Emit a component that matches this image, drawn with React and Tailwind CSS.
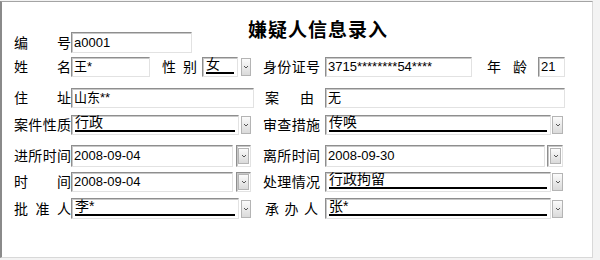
import React from "react"

const sunken =
  "border border-t-[#8e8e8e] border-l-[#8e8e8e] border-r-[#e2e2e2] border-b-[#e2e2e2] shadow-[inset_1px_1px_0_#c8c8c8] bg-white"

function Label({ text, className = "w-[57px]" }) {
  return (
    <div className={`flex shrink-0 justify-between text-[14px] leading-[16px] ${className}`}>
      {text.split("").map((c, i) => (
        <span key={i}>{c}</span>
      ))}
    </div>
  )
}

function TextBox({ value, className }) {
  return (
    <div className={`flex h-full shrink-0 items-center pl-[2px] text-[13px] ${sunken} ${className}`}>
      {value}
    </div>
  )
}

function Arrow({ className = "h-[18px] w-[10px]" }) {
  return (
    <div
      className={`flex shrink-0 items-center justify-center border border-[#b4b4b4] bg-gradient-to-b from-[#fbfbfb] to-[#dadada] ${className}`}
    >
      <svg width="6" height="4" viewBox="0 0 6 4">
        <path d="M1 1 L3 3 L5 1" fill="none" stroke="#555" strokeWidth="1" />
      </svg>
    </div>
  )
}

function Combo({ value, boxW, gap = "ml-[2px]", arrowW = "w-[10px]" }) {
  return (
    <div className="flex h-full items-center">
      <div className={`flex h-full shrink-0 items-end px-[3px] pb-[2px] ${sunken} ${boxW}`}>
        <div className="w-full border-b-2 border-black text-[14px] leading-[15px]">{value}</div>
      </div>
      <div className={gap}>
        <Arrow className={`h-[18px] ${arrowW}`} />
      </div>
    </div>
  )
}

function DateBox({ value, boxW, frameW, gap = "ml-[3px]" }) {
  return (
    <div className="flex h-full items-center">
      <TextBox value={value} className={boxW} />
      <div className={`flex h-full shrink-0 items-center justify-end pr-[1px] ${sunken} ${gap} ${frameW}`}>
        <Arrow className="h-[16px] w-[11px]" />
      </div>
    </div>
  )
}

function Row({ className, left, leftLabel, right, rightLabel, rightLabelW }) {
  return (
    <div className={`flex items-center ${className}`}>
      <Label text={leftLabel} />
      <div className="flex h-full w-[192px] shrink-0">{left}</div>
      <div className="w-[62px] shrink-0">
        <Label text={rightLabel} className={rightLabelW || "w-[57px]"} />
      </div>
      <div className="flex h-full">{right}</div>
    </div>
  )
}

export default function App() {
  return (
    <div className="h-[260px] w-[600px] bg-[#f3f3f3] pt-px font-['Liberation_Sans','Noto_Sans_CJK_SC',sans-serif] text-black">
      <div className="h-[257px] w-[593px] border-t border-l-2 border-r border-b border-t-[#a4a4a4] border-l-[#8a8a8a] border-r-[#d8d8d8] border-b-[#d8d8d8] bg-white pl-[12px] pt-[14px]">
        {/* first row shares its height with the title */}
        <div className="flex items-start">
          <div className="mt-4 flex h-[21px] items-center">
            <Label text="编号" />
            <TextBox value="a0001" className="w-[121px]" />
          </div>
          <div className="ml-[56px] font-['Noto_Sans_CJK_SC',sans-serif] text-[19px] font-bold leading-[25px] tracking-[1px]">
            嫌疑人信息录入
          </div>
        </div>

        <div className="mt-1 flex h-[20px] items-center">
          <Label text="姓名" />
          <TextBox value="王*" className="w-[79px]" />
          <Label text="性别" className="ml-[12px] w-[35px]" />
          <div className="ml-[5px] h-full">
            <Combo value="女" boxW="w-[36px]" gap="ml-[3px]" />
          </div>
          <Label text="身份证号" className="ml-[12px] w-[57px]" />
          <TextBox value="3715********54****" className="ml-[5px] w-[147px]" />
          <Label text="年龄" className="ml-[15px] w-[40px]" />
          <TextBox value="21" className="ml-[11px] w-[27px]" />
        </div>

        <Row
          className="mt-[11px] h-[20px]"
          leftLabel="住址"
          left={<TextBox value="山东**" className="w-[183px]" />}
          rightLabel="案由"
          rightLabelW="ml-[2px] w-[49px]"
          right={<TextBox value="无" className="w-[240px]" />}
        />

        <Row
          className="mt-[7px] h-[20px]"
          leftLabel="案件性质"
          left={<Combo value="行政" boxW="w-[168px]" />}
          rightLabel="审查措施"
          right={<Combo value="传唤" boxW="w-[226px]" gap="ml-[1px]" arrowW="w-[11px]" />}
        />

        <Row
          className="mt-[10px] h-[22px]"
          leftLabel="进所时间"
          left={<DateBox value="2008-09-04" boxW="w-[162px]" frameW="w-[15px]" />}
          rightLabel="离所时间"
          right={<DateBox value="2008-09-30" boxW="w-[220px]" frameW="w-[16px]" gap="ml-[2px]" />}
        />

        <Row
          className="mt-[5px] h-[20px]"
          leftLabel="时间"
          left={<DateBox value="2008-09-04" boxW="w-[162px]" frameW="w-[15px]" />}
          rightLabel="处理情况"
          right={<Combo value="行政拘留" boxW="w-[226px]" gap="ml-[1px]" arrowW="w-[11px]" />}
        />

        <Row
          className="mt-[6px] h-[21px]"
          leftLabel="批准人"
          left={<Combo value="李*" boxW="w-[168px]" />}
          rightLabel="承办人"
          rightLabelW="ml-[2px] w-[53px]"
          right={<Combo value="张*" boxW="w-[226px]" gap="ml-[1px]" arrowW="w-[11px]" />}
        />
      </div>
    </div>
  )
}
